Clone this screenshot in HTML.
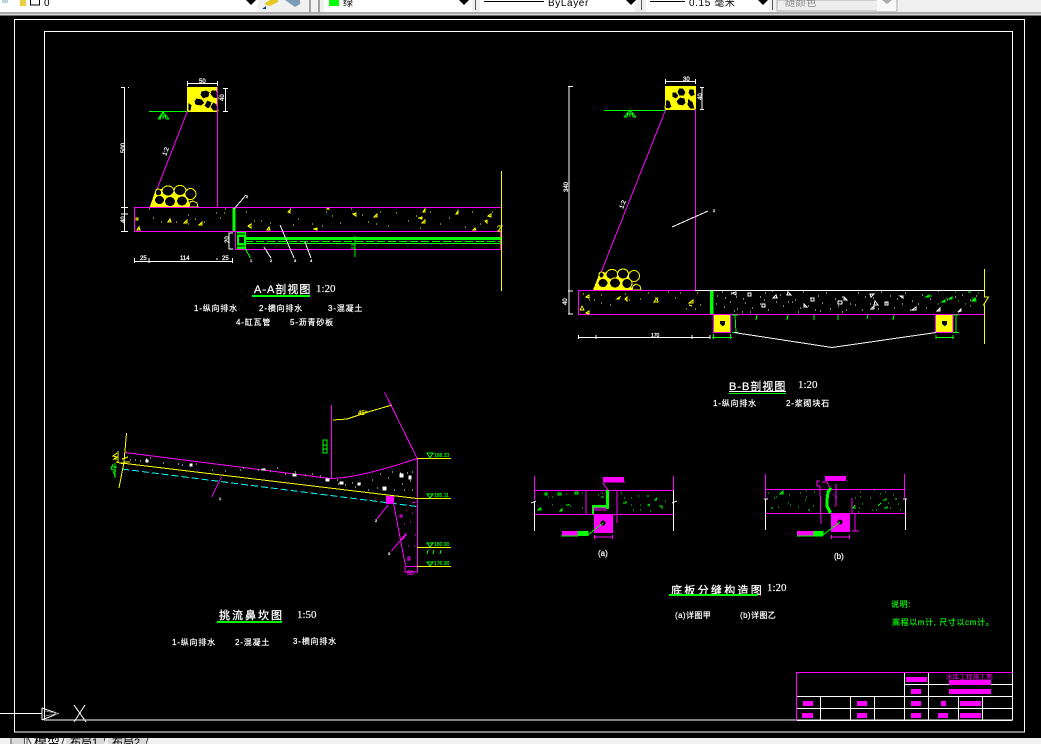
<!DOCTYPE html>
<html><head><meta charset="utf-8"><title>CAD</title>
<style>
html,body{margin:0;padding:0;background:#000;width:1041px;height:744px;overflow:hidden}
svg{display:block;position:absolute;left:0;top:0}
text{font-family:"Liberation Sans","Noto Sans CJK SC",sans-serif;fill:#fff;font-size:8px}
.t{font-size:12px;letter-spacing:1px;stroke:#fff;stroke-width:.25px}
.s{font-family:"Liberation Serif","Noto Sans CJK SC",serif;font-size:11px;stroke:#fff;stroke-width:.15px}
.l{font-size:8px;letter-spacing:.8px;fill:#fff;stroke:#fff;stroke-width:.2px}
.g{fill:#0f0;font-size:8px;letter-spacing:.6px;stroke:#0f0;stroke-width:.15px}
.d{font-size:6px;stroke:#fff;stroke-width:.25px}
.v{fill:#0f0;font-size:5px;stroke:#0f0;stroke-width:.15px}
.b{fill:#000;font-size:10px}
</style></head><body>
<svg width="1041" height="744" viewBox="0 0 1041 744" xmlns="http://www.w3.org/2000/svg">
<rect width="1041" height="744" fill="#000"/>
<!-- toolbar -->
<rect width="1041" height="13" fill="#f0f0f0"/>
<rect y="12" width="1041" height="2" fill="#a8a8a8"/>
<rect y="14" width="1041" height="1" fill="#d8d8d8"/>
<rect y="15" width="1041" height="1" fill="#707070"/>
<rect width="258" height="12" fill="#fff"/>
<rect x="2" y="0" width="6" height="3" fill="#bcd0e0"/>
<rect x="20" y="0" width="6" height="6" fill="#e8d040"/>
<rect x="30.500" y="-1" width="9" height="6" fill="#fff" stroke="#000"/>
<text x="44" y="6" class="b">0</text>
<path d="M246 0h10l-5 5z" fill="#000"/>
<path d="M264 4l6-4h8v2l-8 4z" fill="#e8c820"/>
<path d="M262 9l4-3v3z" fill="#204080"/>
<path d="M285 0h15v4l-5 3z" fill="#7a9ab8"/>
<rect x="309" y="0" width="2" height="12" fill="#a0a0a0"/>
<rect x="318" y="0" width="2" height="12" fill="#a0a0a0"/>
<rect x="324" width="148" height="12" fill="#fff"/>
<rect x="329" y="0" width="10" height="6" fill="#00ff00"/>
<text x="343" y="6" class="b">绿</text>
<path d="M459 0h10l-5 5z" fill="#000"/>
<rect x="475" y="0" width="1" height="10" fill="#555"/>
<rect x="480" width="155" height="12" fill="#fff"/>
<rect x="484" y="1" width="60" height="1" fill="#000"/>
<text x="548" y="6" class="b" letter-spacing=".6">ByLayer</text>
<path d="M626 0h10l-5 5z" fill="#000"/>
<rect x="641" y="0" width="1" height="10" fill="#555"/>
<rect x="646" width="123" height="12" fill="#fff"/>
<rect x="650" y="1" width="35" height="1" fill="#000"/>
<text x="689" y="6" class="b" letter-spacing=".6">0.15 毫米</text>
<path d="M758 0h10l-5 5z" fill="#000"/>
<rect x="772" y="0" width="1" height="10" fill="#555"/>
<rect x="777" width="120" height="11" fill="#ededed" stroke="#b0b0b0"/>
<rect x="877" width="19" height="11" fill="#f8f8f8"/>
<text x="785" y="6" class="b" style="fill:#888" letter-spacing=".6">随颜色</text>
<path d="M882 0h10l-5 4z" fill="#aaa"/>

<g shape-rendering="crispEdges" fill="none">
<!-- frames -->
<rect x="14.500" y="19.500" width="1010" height="712.500" stroke="#fff"/>
<rect x="44.500" y="31.500" width="968" height="688.500" stroke="#fff"/>

<!-- A-A section -->
<rect x="187.500" y="87.500" width="30" height="24" fill="#ff0" stroke="#ff0"/>
<g fill="#000" stroke="#ff0">
<path d="M201 91l5-1 4 2-1 5-6 2-3-4z"/><path d="M211 90l6 0 1 9-5-1-3-4z"/><path d="M196 98l6 1 3 4-4 3-6-1-1-4z"/><path d="M207 100l5 2-1 5-3 2-4-3z"/><path d="M188 102l4 3-1 6-3 0z"/><path d="M213 102l4 2 1 7-5 0-3-4z"/>
</g>
<path d="M217.500 87V207" stroke="#f0f"/>
<path d="M187.500 111L150 207" stroke="#f0f"/>
<path d="M149 111.500H187" stroke="#0f0"/>
<path d="M158 119l5-7 6 7M158 119h3M166 119h3M160 116h6M163 112v7M161 114l-1 5M165 114l1 5" stroke="#0f0"/>
<path d="M124.500 87V231M121 87.500h4M128 87.500h1M121 207.500h7M121 214h7M121 231.500h7" stroke="#fff"/>
<path d="M187 83.500h31M187.500 81v5M217.500 81v5" stroke="#fff"/>
<path d="M225.500 88v23M223 88.500h5M223 111.500h5" stroke="#fff"/>
<text x="199" y="83" class="d">50</text>
<text transform="translate(125,153) rotate(-90)" class="d">500</text>
<text transform="translate(224,101) rotate(-90)" class="d">40</text>
<text transform="translate(125,223) rotate(-90)" class="d">40</text>
<text transform="translate(166,156) rotate(-70)" class="d">1:2</text>
<!-- lower rubble -->
<path d="M150 207L156 189L186 190L190 207z" fill="#ff0" stroke="none"/>
<g stroke="#ff0" fill="#000">
<ellipse cx="158.500" cy="192.500" rx="3" ry="3.500"/>
<ellipse cx="168" cy="191" rx="6" ry="5"/>
<ellipse cx="180" cy="190.500" rx="6" ry="5"/>
<ellipse cx="190.500" cy="194" rx="5.500" ry="5.500"/>
<ellipse cx="159.500" cy="200" rx="5" ry="4.500"/>
<ellipse cx="170" cy="201.500" rx="5.500" ry="5"/>
<ellipse cx="182" cy="201" rx="5.500" ry="5"/>
<path d="M189 207l1-5 3-1 4 2 1 4z"/>
</g>
<!-- slab -->
<rect x="134.500" y="207.500" width="367" height="24" stroke="#f0f"/>
<rect x="232.500" y="208" width="3" height="23" fill="#0f0"/>
<path d="M149 209h1M153 218h1M161 222h1M168 221h1M176 222h1M188 215h1M195 219h1M188 224h1M204 222h1M216 213h1M220 218h1M224 213h1M225 209h1M246 212h1M254 221h1M261 221h1M270 223h1M290 209h1M293 225h1M298 219h1M312 224h1M322 226h1M326 212h1M332 216h1M340 223h1M351 209h1M362 215h1M368 222h1M376 224h1M380 212h1M388 226h1M396 213h1M408 221h1M416 216h1M420 228h1M430 212h1M440 224h1M449 218h1M456 214h1M465 227h1M472 212h1M480 224h1M492 212h1M497 227h1" stroke="#ff0"/>
<path d="M139 227l-2 3h3zM136 218h2v2h-2zM170 219l-2 3h3zM187 220l-3 3h3zM202 222l-3 3h3zM251 224l-3 2 3 2zM269 227l-2 3h3zM290 210l-2 2 2 1zM317 228l-3 1 3 1zM328 208l-1 1h2zM356 213l-3 1 3 2zM377 214l-3 3h3zM425 209l-2 3h2zM422 217l-3 1 3 1zM425 220l-3 3h3zM458 211l-2 3h2zM491 214l-3 2 3 1zM487 220l-2 1 2 2zM475 228l-2 2h3z" stroke="#ff0"/>
<!-- pipe -->
<rect x="235.500" y="231.500" width="265" height="18" stroke="#f0f"/>
<rect x="245" y="237" width="256" height="3" fill="#0f0"/>
<path d="M245 243.500H501" stroke="#0f0"/>
<path d="M245 241.500H501" stroke="#0f0" stroke-dasharray="8 3"/>
<rect x="237" y="232" width="9" height="17" fill="#0f0"/>
<rect x="239" y="237" width="5" height="6" fill="#000"/>
<path d="M237 234h8M237 246h8" stroke="#000"/>
<path d="M355 236v21M351 245h4M351 248h4" stroke="#0f0"/>
<path d="M501.500 171V291" stroke="#ff0"/>
<path d="M498 226h4l-4 5h4" stroke="#ff0"/>
<path d="M134 261.500H232M134.500 258v5M149 258v5M232.500 258v5M216 259h2" stroke="#fff"/>
<text x="140" y="260" class="d">25</text><text x="180" y="260" class="d">114</text><text x="222" y="260" class="d">25</text>
<text transform="translate(229,243) rotate(-90)" class="d">20</text>
<path d="M234 209L246 195M280 225L294 258M305 242L311 258M264 247L271 258" stroke="#fff"/>
<path d="M245.500 249L250.500 258" stroke="#0f0"/>
<path d="M233 233H229V249H233" stroke="#fff"/>
</g>
<text x="246" y="198" class="d" style="font-size:4px">2</text>
<text x="250" y="262" class="d" style="font-size:4px">1</text><text x="270" y="262" class="d" style="font-size:4px">2</text><text x="294" y="262" class="d" style="font-size:4px">3</text><text x="310" y="262" class="d" style="font-size:4px">4</text>
<text x="254" y="293" class="t" style="font-size:11px">A-A剖视图</text>
<text x="316" y="292" class="s">1:20</text>
<rect x="252" y="295" width="58" height="2" fill="#00ff00"/>
<text x="194" y="311" class="l">1-纵向排水</text><text x="259" y="311" class="l">2-横向排水</text><text x="328" y="311" class="l">3-混凝土</text>
<text x="236" y="325" class="l">4-缸瓦管</text><text x="290" y="325" class="l">5-沥青砂板</text>

<!-- B-B section -->
<g shape-rendering="crispEdges" fill="none">
<rect x="665.500" y="86.500" width="30" height="23" fill="#ff0" stroke="#ff0"/>
<g fill="#000" stroke="#ff0">
<path d="M679 88l4 0 3 4-2 4-5 0-2-4z"/><path d="M689 89l5 0 1 6-4 2-3-4z"/><path d="M672 92l4 0 3 4-3 3-4-2z"/><path d="M680 97l5 1 1 5-3 3-5-1-2-4z"/><path d="M666 99l4 2 2 6-3 2-4-1z"/><path d="M688 98l5 4 2 7h-5l-3-4z"/>
</g>
<path d="M695.500 109V290" stroke="#f0f"/>
<path d="M665.500 110L594 290" stroke="#f0f"/>
<path d="M604 110.500H665" stroke="#0f0"/>
<path d="M624 117l6-7 6 7M624 117h3M633 117h3M626 114h8M630 110v7M628 112l-1 5M632 112l1 5" stroke="#0f0"/>
<path d="M569 86V314M568 86.500h5M568 291h5M568 314h5" stroke="#fff"/>
<path d="M665 81.500h31M665.500 79v5M695.500 79v5" stroke="#fff"/>
<path d="M702 87v23M700 87.500h4M700 109.500h4" stroke="#fff"/>
<path d="M672 227L708 211" stroke="#fff"/>
<!-- rubble -->
<path d="M593 290L600 272L630 274L632 290z" fill="#ff0" stroke="none"/>
<g stroke="#ff0" fill="#000">
<ellipse cx="601.500" cy="275" rx="2.500" ry="3"/>
<ellipse cx="612" cy="274.500" rx="6" ry="5"/>
<ellipse cx="623" cy="274" rx="5.500" ry="5"/>
<ellipse cx="634" cy="276" rx="5.500" ry="5.500"/>
<ellipse cx="603" cy="283" rx="5" ry="4.500"/>
<ellipse cx="615" cy="283" rx="5.500" ry="5"/>
<ellipse cx="627" cy="283.500" rx="5" ry="5"/>
<path d="M632 290l1-4 3-2 4 2 1 4z"/>
</g>
<!-- slab -->
<path d="M578.500 314.500V290.500H695" stroke="#f0f"/>
<path d="M695 290.500H984" stroke="#fff"/>
<path d="M578 314.500H984" stroke="#f0f"/>
<rect x="710" y="291" width="3.500" height="23" fill="#0f0"/>
<path d="M984.500 269V297l4 0-5 8h1V344" stroke="#ff0"/>
<path d="M583 294h1M589 300h1M594 300h1M601 295h1M601 303h1M610 305h1M625 294h1M629 300h1M640 299h1M648 293h1M655 298h1M668 292h1M675 298h1M680 293h1M686 309h1M695 309h1M697 293h1M700 305h1" stroke="#ff0"/>
<path d="M589 295l-3 2 3 1zM582 306l-2 4h4zM589 311l-3 2 3 1zM620 297l-3 2 2 0zM627 297l-2 2 2 2zM657 298l-3 4h4zM693 300l-4 3h4zM692 306l-3-1" stroke="#ff0"/>
<path d="M717 296h1M722 292h1M725 298h1M731 294h1M736 297h1M743 299h1M760 297h1M765 293h1M772 291h1M780 295h1M788 302h1M795 300h1M803 292h1M810 298h1M818 296h1M826 293h1M835 299h1M842 297h1M850 304h1M858 293h1M865 297h1M873 298h1M881 292h1M890 296h1M897 299h1M905 293h1M912 301h1M922 295h1M930 299h1M938 291h1M947 300h1M955 297h1M962 295h1M970 300h1M976 296h1
M716 304h1M724 307h1M730 302h1M737 309h1M745 303h1M752 308h1M760 304h1M768 310h1M776 302h1M783 306h1M792 302h1M800 308h1M808 306h1M815 310h1M822 303h1M830 309h1M838 306h1M846 310h1M855 305h1M862 310h1M870 304h1M878 309h1M886 303h1M894 308h1M902 304h1M910 310h1M918 304h1M926 308h1M734 311h1M742 312h1M750 312h1M764 300h1M798 312h1M820 311h1M842 312h1" stroke="#fff"/>
<path d="M748 293h3v3h-3zM762 304h3v3h-3zM811 298h3v3h-3zM838 301h4v3h-4zM844 297l3 3h-3zM875 301l3 4h-4zM885 302h3v3h-3zM870 294h4l-3 3zM900 296h3v2zM912 310h4v-3zM874 306l-3 3h3zM804 304l3 3h-3zM732 293l4-1v3zM776 295l-3 3 4 0zM788 292l3 3h-4zM940 308l-3 3h3zM958 312l3-1v-2z" stroke="#fff"/>
<path d="M930 296h2M938 304h1M946 298h1M955 292h1M958 301h1M965 304h1M970 306h1M978 293h1M972 298h1" stroke="#0f0"/>
<path d="M929 295l-3 2h3zM952 297l-3 2h3zM975 298l-3 3h4zM945 300l-3 2 3 0zM968 292h3" stroke="#0f0" fill="#0f0"/>
<!-- boxes -->
<rect x="713.500" y="314.500" width="17" height="18" fill="#ff0" stroke="#f0f"/>
<rect x="935.500" y="314.500" width="17.500" height="18" fill="#ff0" stroke="#f0f"/>
<path d="M720 321h5v3l-2 2h-1l-2-2z" fill="#000"/>
<path d="M942 321h5v3l-2 2h-1l-2-2z" fill="#000"/>
<path d="M735 314.500l1 18M732 315h6M732 332.500h6M712 337.500h20M713.500 334v5M730.500 334v5M956 316l0 17M953 315h6M953 332.500h6M936 337.500h18M936 335v4M953 335v4" stroke="#0f0"/>
<path d="M757 315l-1 5M788 315l-1 5M814 315l0 5M838 315l0 5M868 315l-1 4M894 315l-1 5" stroke="#0f0"/>
<path d="M734 332.500L832 347.500L936 332.500" stroke="#fff"/>
<path d="M578 337.500H710M578.500 335v4M596 335v4M692 335v4M710 335v4" stroke="#fff"/>
</g>
<text x="683" y="81" class="d">30</text><text x="713" y="212" class="d" style="font-size:4px">2</text><text x="651" y="337" class="d" style="font-size:5px" >170</text>
<text transform="translate(568,192) rotate(-90)" class="d">340</text><text transform="translate(702,100) rotate(-90)" class="d">40</text><text transform="translate(567,305) rotate(-90)" class="d">40</text>
<text transform="translate(623,209) rotate(-70)" class="d">1:2</text>
<text x="729" y="390" class="t" style="font-size:11px">B-B剖视图</text>
<text x="798" y="388" class="s">1:20</text>
<rect x="729" y="391" width="57" height="1" fill="#fff"/><rect x="729" y="393" width="57" height="1" fill="#00ff00"/>
<text x="713" y="406" class="l">1-纵向排水</text><text x="786" y="406" class="l">2-浆砌块石</text>

<!-- spillway -->
<g shape-rendering="crispEdges" fill="none">
<path d="M125 452.500L330 478.500C345 478.500 375 473 417 458.500" stroke="#f0f" stroke-width="1"/>
<path d="M117 462.500L417 498.500" stroke="#ff0"/>
<path d="M122 469L417 506.500" stroke="#0ff" stroke-dasharray="7 3"/>
<path d="M331.500 405V478" stroke="#f0f"/>
<path d="M333 420L347 419L368 412L392 405" stroke="#ff0"/>
<path d="M384.500 392L417 458" stroke="#f0f"/>
<path d="M417.500 458V566.500" stroke="#f0f"/>
<path d="M405.500 566.500H417" stroke="#f0f"/>
<path d="M393.500 503L405.500 566" stroke="#f0f"/>
<rect x="386" y="496" width="8" height="8" fill="#f0f"/>
<path d="M417 458.500H451M417 498.500H451M417 547.500H451M417 566.500H451" stroke="#ff0"/>
<g stroke="#0f0"><path d="M427 453h6l-3 5z"/><path d="M427 494h6l-3 4z"/><path d="M427 543h6l-3 4zM428 550l-1 4M434 550l-1 4M441 550l-1 4"/><path d="M427 562h6l-3 4z"/></g>
<path d="M126.500 433L124 462L119 488" stroke="#ff0"/>
<path d="M117 453l-4 3 4 1-3 2h3M118 451v12M122 459l6-2M124 462h6" stroke="#ff0"/>
<path d="M115 463v15M111 467h6M113 464l-2 5 5 2M113 471l2 5" stroke="#0f0"/>
<path d="M116 462l8 2" stroke="#ff0"/>
<path d="M323 440h4v13h-4zM323 445h4M323 449h4" stroke="#0f0"/>
<path d="M221.500 477L211.500 497M388 505L377 519M406.500 533L391.500 551" stroke="#f0f"/>
<path d="M405 572.500V567M417.500 572.500V567M405 572h13" stroke="#f0f"/>
<path d="M130 460h1M135 460h1M140 461h1M146 459h1M150 458h1M163 463h1M178 464h1M182 465h1M190 466h1M196 464h1M212 470h1M225 471h1M240 470h1M243 468h1M258 470h1M270 471h1M277 468h1M285 474h1M295 472h1M305 475h1M312 474h1M320 476h1M338 484h1M345 485h1M352 483h1M360 483h1M372 480h1M380 474h1M392 472h1M400 473h1M407 473h1M412 472h1M337 480h1M355 487h1M368 490h1M377 488h1M388 478h1M404 490h1M412 490h1M410 481h1M402 484h1M394 490h1" stroke="#fff"/>
<path d="M146 460h2v2h-2zM190 464h2v2h-2zM262 469h3v1h-3zM293 474h3v2h-3zM326 479h3v2h-3zM340 482h3v2h-3zM358 483h2v2h-2zM383 487h3v3h-3zM400 474h3v3h-3zM409 476h2v3h-2z" fill="#fff" stroke="#fff"/>
<path d="M400 515h2v2h-2zM406 510h1M412 513h1M404 524h1M410 522h1M415 535h1M405 534h1M408 546h1M414 546h1M408 557h2v3h-2zM402 540l4-5M412 503l3-1" stroke="#f0f"/>
</g>
<text x="434" y="457" class="v">188.33</text><text x="434" y="497" class="v">185.11</text><text x="434" y="546" class="v">180.00</text><text x="434" y="565" class="v">176.00</text>
<text x="219" y="500" class="d" style="font-size:4px">1</text>
<text x="375" y="522" class="d" style="font-size:4px">2</text>
<text x="388" y="555" class="d" style="font-size:4px">3</text>
<text x="407" y="575" class="d" style="fill:#f0f;stroke:#f0f">50</text>
<text x="358" y="415" class="d" style="fill:#ff0;stroke:#ff0">45°</text>
<text x="219" y="619" class="t" style="font-size:11px;letter-spacing:2px">挑流鼻坎图</text>
<text x="297" y="618" class="s">1:50</text>
<rect x="217" y="621" width="65" height="2" fill="#00ff00"/>
<text x="172" y="645" class="l">1-纵向排水</text><text x="235" y="645" class="l">2-混凝土</text><text x="293" y="644" class="l">3-横向排水</text>

<!-- detail a -->
<g shape-rendering="crispEdges" fill="none">
<path d="M534.500 476V500M673.500 476V490" stroke="#f0f"/>
<path d="M534.500 501V531M673.500 490V531" stroke="#fff"/>
<path d="M531 503l5-2M672 503l5-2" stroke="#fff"/>
<path d="M534.500 490.500H673.500M534.500 514.500H673.500" stroke="#f0f"/>
<rect x="594" y="514" width="19" height="19" fill="#f0f"/>
<circle cx="603" cy="523" r="2.500" fill="#000"/>
<path d="M606 490h3v19h-3zM592 505h14v3h-12v6h-2z" fill="#0f0"/>
<path d="M594 508h12v2h-12z" stroke="#f0f"/>
<rect x="603" y="477" width="21" height="5" fill="#f0f"/>
<path d="M603 483l5 7M603 482h22" stroke="#f0f"/>
<rect x="562" y="531" width="15.500" height="5" fill="#f0f"/>
<rect x="577.500" y="531" width="11" height="5" fill="#0f0"/>
<path d="M561 536H578M588 535L603 523" stroke="#0f0"/>
<path d="M594 537H613M594.500 535v4M612.500 535v4M617 490v33M586 490v24" stroke="#f0f"/>
<path d="M545 493h2v2h-2zM548 497h1M558 493h3v2h-3zM575 492h3v2h-3zM538 510l2-2h1v2zM560 511l2-2v2zM566 494h1M570 506h1M552 505h1M566 505h3v-1M552 497h1M582 493h1M582 508h1M598 495h1M602 493h1M601 497h3M621 493h1M624 498h1M623 503h3v-2M631 498h1M638 496h1M633 510h1M640 505h1M647 496h2M650 504l-2 1 2 1M657 498l-2 2h2M659 506h3v3M650 511h1M640 510h1M631 505h1M665 501h1" stroke="#0f0"/>
</g>
<text x="598" y="556" class="l" style="letter-spacing:0">(a)</text>

<!-- detail b -->
<g shape-rendering="crispEdges" fill="none">
<path d="M765.500 474V498M904.500 474V498" stroke="#f0f"/>
<path d="M765.500 499V530M905.500 499V530" stroke="#fff"/>
<path d="M764 499h4M903 499h4" stroke="#fff"/>
<path d="M765.500 489.500H905.500M765.500 513.500H905.500" stroke="#f0f"/>
<rect x="831" y="513" width="19" height="19" fill="#f0f"/>
<circle cx="840" cy="522" r="2.500" fill="#000"/>
<rect x="825" y="476" width="21" height="5" fill="#f0f"/>
<path d="M820 481h-3v5h3M822 482h5l4 8M820 486l1 38M836 484v22M852 498v16" stroke="#f0f"/>
<path d="M831 488l-3 4-1 8 0 6 3 6 1 1" stroke="#0f0" stroke-width="3"/>
<path d="M835 497h2M833 495h1M834 506h1" stroke="#f0f"/>
<rect x="797" y="531" width="16.500" height="5" fill="#f0f"/>
<rect x="813.500" y="531" width="10" height="5" fill="#0f0"/>
<path d="M797 536H823M823 535L840 522" stroke="#0f0"/>
<path d="M831 537H850M831.500 535v4M849.500 535v4M855 514v17M852 531h7" stroke="#f0f"/>
<path d="M783 491l-3 3h3zM789 495h1M768 493h1M776 497h1M788 503h1M800 493h1M806 491h1M790 505h1M771 508h2M778 507h1M774 498h1M798 507h1M805 500h1M814 492h1M808 510h2M813 506h1M806 497h1M855 498h1M860 492h1M859 508h1M862 504h1M860 497h1M870 498h1M872 510h1M858 512h1M885 492h1M880 494h1M883 500h3v-2M878 506l3-3M876 510h1M884 508h3v-2M893 495h1M895 499h2M898 504h1M900 510h1M888 503h1M890 508h1M855 505l-2 3h3M874 490h1" stroke="#0f0"/>
</g>
<text x="834" y="559" class="l" style="letter-spacing:0">(b)</text>

<text x="671" y="594" class="t" style="font-size:11px;letter-spacing:2.300px">底板分缝构造图</text>
<text x="767" y="591" class="s">1:20</text>
<rect x="669" y="594" width="89" height="2" fill="#00ff00"/>
<text x="675" y="618" class="l" style="letter-spacing:.4px">(a)详图甲</text><text x="740" y="618" class="l" style="letter-spacing:.4px">(b)详图乙</text>
<text x="891" y="607" class="g">说明:</text>
<text x="892" y="625" class="g">高程以m计, 尺寸以cm计。</text>

<!-- title block -->
<g shape-rendering="crispEdges" fill="none">
<path d="M796 696.500H1012M796 708.500H1012M796 720.500H1012M904 684.500H1012M904.500 672V720M928.500 672V720M820.500 696V720M850.500 696V720M874.500 696V720M958.500 696V720M982.500 696V720M1012.500 672V720" stroke="#fff"/>
<path d="M796.500 672V721M796 672.500H1012.500" stroke="#f0f"/>
<g fill="#f0f">
<rect x="906" y="677" width="21" height="5"/><rect x="911" y="689" width="10" height="5"/><rect x="949" y="680" width="42" height="5"/><rect x="949" y="689" width="42" height="5"/>
<rect x="803" y="701" width="10" height="5"/><rect x="857" y="701" width="10" height="5"/><rect x="911" y="701" width="10" height="5"/><rect x="941" y="701" width="5" height="5"/><rect x="960" y="701" width="21" height="5"/>
<rect x="802" y="713" width="11" height="5"/><rect x="857" y="713" width="10" height="5"/><rect x="911" y="713" width="10" height="5"/><rect x="938" y="713" width="10" height="5"/><rect x="960" y="713" width="21" height="5"/>
</g>
</g>
<text x="946" y="679" style="fill:#f0f;font-size:6.500px;letter-spacing:.2px">水库工程施工图</text>

<!-- UCS -->
<g fill="none" shape-rendering="crispEdges">
<path d="M0 713.500H42" stroke="#fff"/>
<path d="M42 708V720M42 708L58 713.500L42 720" stroke="#fff"/>
<path d="M45 711L58 713.500L45 716" stroke="#777"/>
<path d="M74 705L86 722M85 705L74 722" stroke="#fff"/>
</g>

<!-- tab bar -->
<rect y="738" width="1041" height="6" fill="#f0f0f0"/>
<rect x="11" y="738" width="14" height="6" fill="#d8d8d8"/>
<path d="M11 738v6M24.500 738v6M27 738v6" stroke="#555"/>
<path d="M28 738l3 6M64 738l-2 6M105 738l-2 6M148 738l-2 6" stroke="#333"/>
<rect x="66" y="738" width="38" height="6" fill="#d8d8d8"/><rect x="108" y="738" width="38" height="6" fill="#d8d8d8"/>
<text x="34" y="746" class="b" style="font-size:13px">模型</text>
<text x="70" y="746" class="b" style="font-size:11px">布局1</text>
<text x="112" y="746" class="b" style="font-size:11px">布局2</text>
</svg>
</body></html>
